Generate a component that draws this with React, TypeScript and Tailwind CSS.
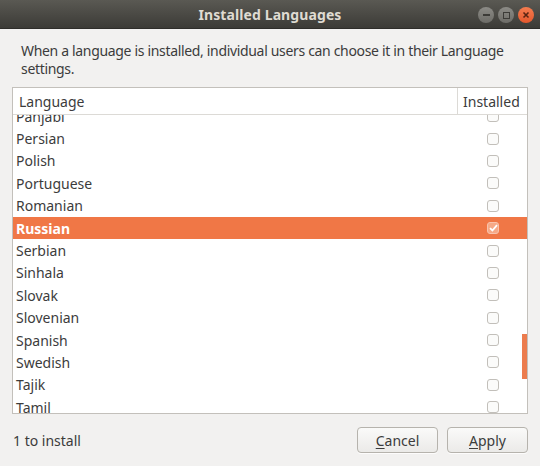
import React from "react";

const langs = [
  "Panjabi",
  "Persian",
  "Polish",
  "Portuguese",
  "Romanian",
  "Russian",
  "Serbian",
  "Sinhala",
  "Slovak",
  "Slovenian",
  "Spanish",
  "Swedish",
  "Tajik",
  "Tamil",
  "Tatar",
];

function Check({ checked }: { checked: boolean }) {
  if (checked) {
    return (
      <div className="w-[12px] h-[12px] rounded-[3px] border border-[#f8c3ad] bg-[#f6a987] flex items-center justify-center">
        <svg width="9" height="8" viewBox="0 0 9 8">
          <path d="M1 4.2 L3.4 6.5 L8 1.2" fill="none" stroke="#ffffff" strokeWidth="1.8" />
        </svg>
      </div>
    );
  }
  return <div className="w-[12px] h-[12px] rounded-[3px] border border-[#c2bfba] bg-[#fbfbfa]" />;
}

export default function App() {
  return (
    <div
      className="w-[540px] h-[466px] bg-[#f2f1f0] flex flex-col overflow-hidden text-[#3c3c3c]"
      style={{ fontFamily: '"Noto Sans", "Open Sans", sans-serif' }}
    >
      {/* Title bar */}
      <div className="relative h-[29px] shrink-0 bg-gradient-to-b from-[#5a5953] to-[#3c3b37] flex items-center justify-center border-b border-[#2e2d2a]">
        <span className="text-[14px] font-bold text-[#dfdbd2] tracking-[0.1px]">Installed Languages</span>
        <div className="absolute right-[6px] top-[7px] flex gap-[4px]">
          <div className="w-[16px] h-[16px] rounded-full bg-gradient-to-b from-[#8c8b86] to-[#6d6c67] flex items-center justify-center">
            <div className="w-[7px] h-[2px] bg-[#3c3b37]" />
          </div>
          <div className="w-[16px] h-[16px] rounded-full bg-gradient-to-b from-[#8c8b86] to-[#6d6c67] flex items-center justify-center">
            <div className="w-[7px] h-[7px] border-[1.5px] border-[#3c3b37]" />
          </div>
          <div className="w-[16px] h-[16px] rounded-full bg-gradient-to-b from-[#f47c4f] to-[#e4572c] flex items-center justify-center">
            <svg width="8" height="8" viewBox="0 0 8 8">
              <path d="M1.5 1.5 L6.5 6.5 M6.5 1.5 L1.5 6.5" stroke="#5a2412" strokeWidth="1.6" />
            </svg>
          </div>
        </div>
      </div>

      {/* Description */}
      <div className="pl-[21px] pr-[12px] pt-[13px] text-[14px] leading-[18px] tracking-[-0.33px] h-[58px] shrink-0">
        When a language is installed, individual users can choose it in their Language settings.
      </div>

      {/* Tree view */}
      <div className="relative mx-[12px] w-[516px] h-[327px] shrink-0 border border-[#c3c0bb] bg-white flex flex-col">
        <div className="h-[27px] shrink-0 flex border-b border-[#dcdad6] text-[14px]">
          <div className="w-[445px] pl-[6px] flex items-center border-r border-[#dcdad6]">Language</div>
          <div className="flex-1 pl-[5px] flex items-center">Installed</div>
        </div>
        <div className="flex-1 overflow-hidden">
          <div className="mt-[-10px] flex flex-col">
            {langs.map((l) => {
              const sel = l === "Russian";
              return (
                <div
                  key={l}
                  className={
                    "h-[22.4px] shrink-0 flex items-center text-[14px] " +
                    (sel ? "bg-[#f07746] text-white font-bold" : "")
                  }
                >
                  <div className="w-[474px] pl-[3px]">{l}</div>
                  <Check checked={sel} />
                </div>
              );
            })}
          </div>
        </div>
        <div className="absolute right-[0px] top-[246px] w-[5px] h-[45px] bg-[#ec7c4e]" />
      </div>

      {/* Footer */}
      <div className="flex items-center pl-[13px] pr-[12px] pt-[13px]">
        <span className="text-[14px] flex-1">1 to install</span>
        <div className="flex gap-[9px]">
          <button className="w-[81px] h-[26px] rounded-[4px] border border-[#b6b3ad] bg-gradient-to-b from-[#fafaf9] to-[#ebeae8] text-[14px] text-[#3c3c3c] shadow-[0_1px_0_rgba(255,255,255,0.8)]">
            <span className="underline underline-offset-2">C</span>ancel
          </button>
          <button className="w-[81px] h-[26px] rounded-[4px] border border-[#b6b3ad] bg-gradient-to-b from-[#fafaf9] to-[#ebeae8] text-[14px] text-[#3c3c3c] shadow-[0_1px_0_rgba(255,255,255,0.8)]">
            <span className="underline underline-offset-2">A</span>pply
          </button>
        </div>
      </div>
    </div>
  );
}
